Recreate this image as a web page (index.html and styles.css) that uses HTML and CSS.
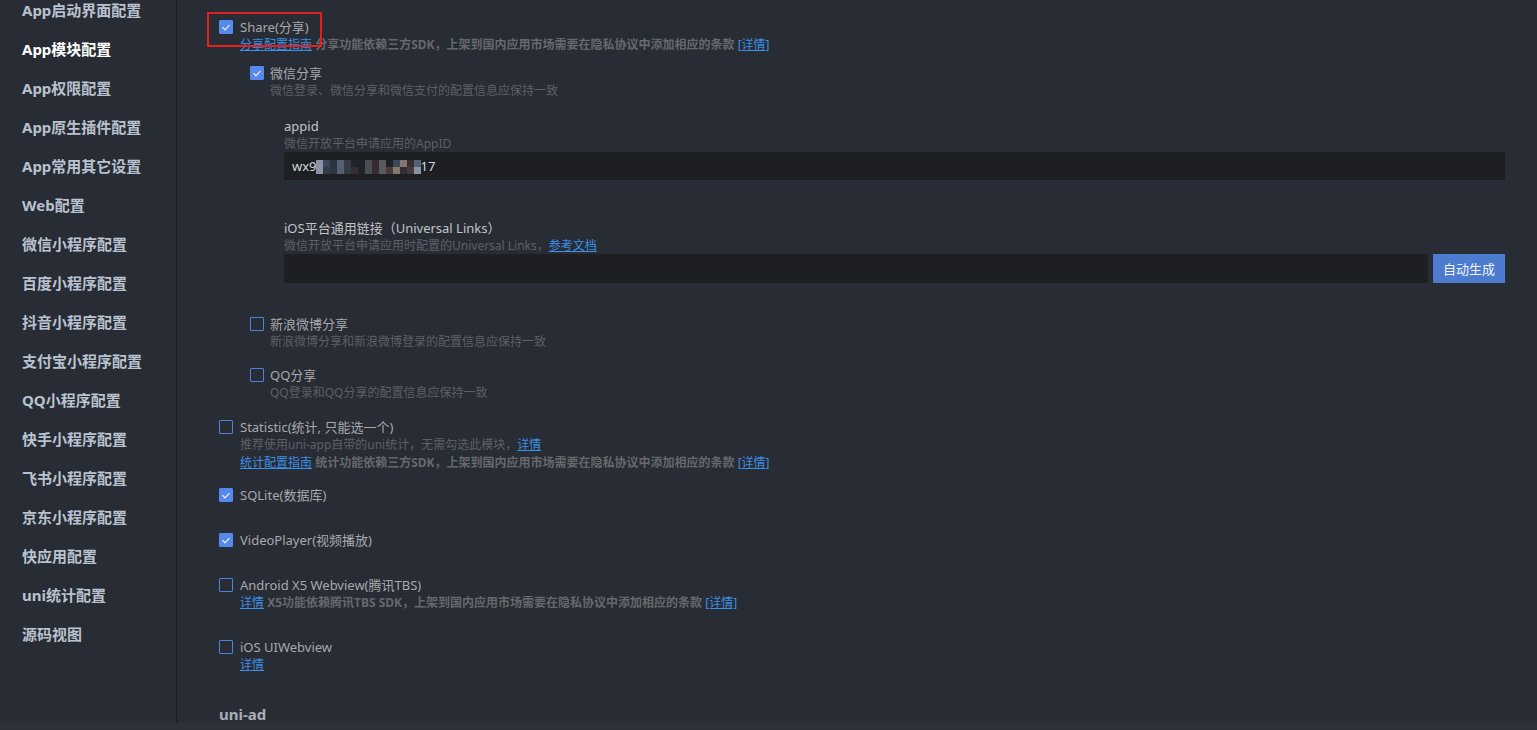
FILE: index.html
```html
<!DOCTYPE html>
<html lang="zh-CN">
<head>
<meta charset="utf-8">
<title>manifest</title>
<link rel="stylesheet" href="styles.css">
</head>
<body>
<div class="app">
  <div class="top">
    <nav class="sidebar">
      <ul class="nav">
        <li>App启动界面配置</li>
        <li class="active">App模块配置</li>
        <li>App权限配置</li>
        <li>App原生插件配置</li>
        <li>App常用其它设置</li>
        <li>Web配置</li>
        <li>微信小程序配置</li>
        <li>百度小程序配置</li>
        <li>抖音小程序配置</li>
        <li>支付宝小程序配置</li>
        <li>QQ小程序配置</li>
        <li>快手小程序配置</li>
        <li>飞书小程序配置</li>
        <li>京东小程序配置</li>
        <li>快应用配置</li>
        <li>uni统计配置</li>
        <li>源码视图</li>
      </ul>
    </nav>
    <main class="main">
      <div class="opt">
        <span class="cb on"></span>
        <div class="opt-body">
          <div class="opt-label">Share(分享)</div>
          <div class="opt-desc"><a class="lnk">分享配置指南</a> <b class="strong">分享功能依赖三方SDK，上架到国内应用市场需要在隐私协议中添加相应的条款</b> <a class="lnk">[详情]</a></div>
          <span class="mark"></span>

          <div class="sub">
            <div class="opt gap-10">
              <span class="cb on"></span>
              <div class="opt-body">
                <div class="opt-label">微信分享</div>
                <div class="opt-desc">微信登录、微信分享和微信支付的配置信息应保持一致</div>
                <div class="field gap-17">
                  <div class="field-label">appid</div>
                  <div class="field-desc">微信开放平台申请应用的AppID</div>
                  <div class="input"><span class="val">wx9</span><span class="blur"><i class="b1"></i><i class="b2"></i><i class="b3"></i><i class="b4"></i><i class="b5"></i><i class="b0"></i><i class="b0"></i><i class="b6"></i><i class="b7"></i><i class="b8"></i><i class="b0"></i><i class="b2"></i><i class="b9"></i><i class="b7"></i><i class="b4"></i><i class="b1"></i><i class="b5"></i><i class="b3"></i><i class="b4"></i><i class="b5"></i><i class="b7"></i><i class="b0"></i><i class="b6"></i><i class="b7"></i><i class="b8"></i><i class="b10"></i><i class="b9"></i><i class="b7"></i><i class="b10"></i><i class="b1"></i></span><span class="val">17</span></div>
                </div>
                <div class="field gap-39">
                  <div class="field-label">iOS平台通用链接（Universal Links）</div>
                  <div class="field-desc">微信开放平台申请应用时配置的Universal Links，<a class="lnk">参考文档</a></div>
                  <div class="input-row">
                    <div class="input"></div>
                    <button class="btn">自动生成</button>
                  </div>
                </div>
              </div>
            </div>

            <div class="opt gap-32">
              <span class="cb"></span>
              <div class="opt-body">
                <div class="opt-label">新浪微博分享</div>
                <div class="opt-desc">新浪微博分享和新浪微博登录的配置信息应保持一致</div>
              </div>
            </div>

            <div class="opt gap-15">
              <span class="cb"></span>
              <div class="opt-body">
                <div class="opt-label">QQ分享</div>
                <div class="opt-desc">QQ登录和QQ分享的配置信息应保持一致</div>
              </div>
            </div>
          </div>
        </div>
      </div>

      <div class="opt gap-16">
        <span class="cb"></span>
        <div class="opt-body">
          <div class="opt-label">Statistic(统计, 只能选一个)</div>
          <div class="opt-desc">推荐使用uni-app自带的uni统计，无需勾选此模块，<a class="lnk">详情</a></div>
          <div class="opt-desc"><a class="lnk">统计配置指南</a> <b class="strong">统计功能依赖三方SDK，上架到国内应用市场需要在隐私协议中添加相应的条款</b> <a class="lnk">[详情]</a></div>
        </div>
      </div>

      <div class="opt gap-14">
        <span class="cb on"></span>
        <div class="opt-body">
          <div class="opt-label">SQLite(数据库)</div>
        </div>
      </div>

      <div class="opt gap-27">
        <span class="cb on"></span>
        <div class="opt-body">
          <div class="opt-label">VideoPlayer(视频播放)</div>
        </div>
      </div>

      <div class="opt gap-27">
        <span class="cb"></span>
        <div class="opt-body">
          <div class="opt-label">Android X5 Webview(腾讯TBS)</div>
          <div class="opt-desc"><a class="lnk">详情</a> <b class="strong">X5功能依赖腾讯TBS SDK，上架到国内应用市场需要在隐私协议中添加相应的条款</b> <a class="lnk">[详情]</a></div>
        </div>
      </div>

      <div class="opt gap-26">
        <span class="cb"></span>
        <div class="opt-body">
          <div class="opt-label">iOS UIWebview</div>
          <div class="opt-desc"><a class="lnk">详情</a></div>
        </div>
      </div>

      <h3 class="section">uni-ad</h3>
    </main>
  </div>
  <div class="bottombar"></div>
</div>
</body>
</html>
```

FILE: styles.css
```css
* { box-sizing: border-box; }
html, body { margin: 0; padding: 0; }
body {
  background: #282c34;
  font-family: "Noto Sans", "Noto Sans CJK SC", sans-serif;
  color: #a9acb2;
  overflow: hidden;
}
.app { display: flex; flex-direction: column; height: 730px; }
.top { display: flex; flex: 1; min-height: 0; }
.sidebar {
  width: 177px;
  flex: none;
  border-right: 1px solid #1a1c22;
  overflow: hidden;
}
.nav { list-style: none; margin: -9px 0 0; padding: 0; }
.nav li {
  height: 39px;
  line-height: 39px;
  padding-left: 22px;
  font-size: 15px;
  font-weight: 700;
  color: #b9c2cf;
  white-space: nowrap;
}
.nav li.active { color: #ffffff; }
.bottombar { height: 7px; background: #2d3139; flex: none; }

.main {
  flex: 1;
  min-width: 0;
  overflow: hidden;
  padding: 18px 32px 0 42px;
}
.opt { display: flex; gap: 7px; position: relative; }
.opt-body { flex: 1; min-width: 0; position: relative; }
.cb {
  width: 14px; height: 14px; flex: none;
  margin-top: 2px;
  border: 1.5px solid #4f82dc;
  border-radius: 1px;
  position: relative;
}
.cb.on { background: #5689ee; border-color: #5689ee; }
.cb.on::after {
  content: "";
  position: absolute;
  left: 3.5px; top: 2px;
  width: 3px; height: 6px;
  border-right: 1.5px solid #fff;
  border-bottom: 1.5px solid #fff;
  transform: rotate(45deg);
}
.opt-label { font-size: 13px; line-height: 18px; color: #a7a9ae; white-space: nowrap; }
.opt-desc { font-size: 12px; line-height: 18px; color: #5d6068; white-space: nowrap; }
.strong { font-weight: 700; color: #66686c; }
.lnk { color: #3c8fe3; text-decoration: underline; cursor: pointer; }
.mark {
  position: absolute;
  left: -33px; top: -6px;
  width: 115px; height: 35px;
  border: 2px solid #e3201d;
  pointer-events: none;
}
.sub { margin-left: 10px; }
.sub .opt { gap: 6px; }
.field { margin-left: 14px; }
.field-label { font-size: 13px; line-height: 18px; color: #c3c4c7; }
.field-desc { font-size: 12px; line-height: 17px; color: #5d6068; white-space: nowrap; }
.input {
  height: 28px;
  background: #1d1f23;
  display: flex; align-items: center;
  padding-left: 8px;
  font-size: 13px;
  color: #d4d6da;
}
.input-row { display: flex; gap: 5px; }
.input-row .input { flex: 1; height: 29px; }
.btn {
  flex: none;
  width: 72px; height: 29px;
  border: none;
  background: #4d7bcd;
  color: #f2f5fb;
  font-family: inherit;
  font-size: 13px;
  padding: 0;
}
.blur {
  display: inline-grid;
  grid-template-columns: repeat(15, 7px);
  grid-auto-rows: 7px;
  margin: 1px 0 0 -1px;
}
.blur i { display: block; }
.b0 { background: #1f2227; }
.b1 { background: #8a94a8; }
.b2 { background: #3b4658; }
.b3 { background: #2c3342; }
.b4 { background: #566070; }
.b5 { background: #343a46; }
.b6 { background: #4c4c55; }
.b7 { background: #362d33; }
.b8 { background: #5b5860; }
.b9 { background: #86766f; }
.b10 { background: #4a3a3b; }

.gap-10 { margin-top: 10px; }
.gap-14 { margin-top: 14px; }
.gap-15 { margin-top: 15px; }
.gap-16 { margin-top: 16px; }
.gap-17 { margin-top: 17px; }
.gap-26 { margin-top: 26px; }
.gap-27 { margin-top: 27px; }
.gap-32 { margin-top: 32px; }
.gap-39 { margin-top: 39px; }

.section {
  margin: 30px 0 0;
  font-size: 15px;
  line-height: 20px;
  font-weight: 700;
  color: #a8aeb8;
}
```
